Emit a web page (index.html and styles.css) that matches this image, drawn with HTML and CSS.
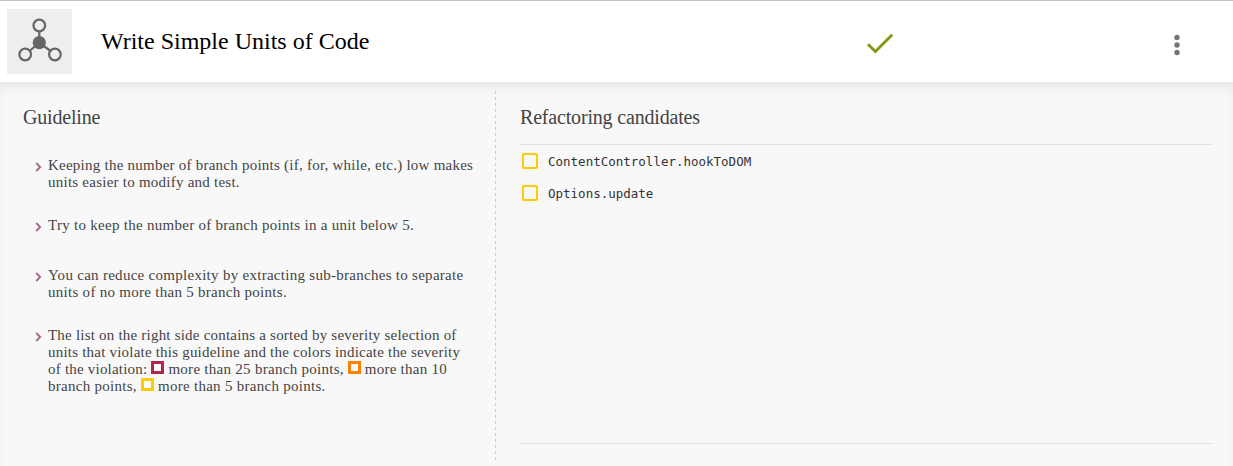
FILE: index.html
```html
<!DOCTYPE html>
<html lang="en">
<head>
<meta charset="utf-8">
<title>Write Simple Units of Code</title>
<link rel="stylesheet" href="styles.css">
</head>
<body>
<header class="header">
  <div class="thumb">
    <svg width="65" height="65" viewBox="0 0 65 65" fill="none" stroke="#666" stroke-width="2.200">
      <path d="M32.300 22v10M32.300 33.700L22.500 42M32.300 33.700L43.500 42"/>
      <circle cx="32.300" cy="16.500" r="5.800"/>
      <circle cx="18.200" cy="45.500" r="5.800"/>
      <circle cx="47.900" cy="45.500" r="5.800"/>
      <circle cx="32.300" cy="33.700" r="6.600" fill="#666" stroke="none"/>
    </svg>
  </div>
  <h1 class="title">Write Simple Units of Code</h1>
  <svg class="check" width="28" height="22" viewBox="0 0 28 22" fill="none" stroke="#7f9a15" stroke-width="2.900"><path d="M2 11.200l7.400 7.300L26.200 1.700"/></svg>
  <svg class="more" width="8" height="22" viewBox="0 0 8 22" fill="#757575"><circle cx="4" cy="3.500" r="2.700"/><circle cx="4" cy="11" r="2.700"/><circle cx="4" cy="18.500" r="2.700"/></svg>
</header>
<main class="panel">
  <section class="guideline">
    <h2 class="heading">Guideline</h2>
    <ul class="rules">
      <li class="rule"><svg class="chevron" width="7" height="10" viewBox="0 0 7 10"><path d="M1.200 1l4 4-4 4"/></svg><p class="text">Keeping the number of branch points (if, for, while, etc.) low makes<br>units easier to modify and test.</p></li>
      <li class="rule"><svg class="chevron" width="7" height="10" viewBox="0 0 7 10"><path d="M1.200 1l4 4-4 4"/></svg><p class="text loose">Try to keep the number of branch points in a unit below 5.</p></li>
      <li class="rule"><svg class="chevron" width="7" height="10" viewBox="0 0 7 10"><path d="M1.200 1l4 4-4 4"/></svg><p class="text loose">You can reduce complexity by extracting sub-branches to separate<br>units of no more than 5 branch points.</p></li>
      <li class="rule"><svg class="chevron" width="7" height="10" viewBox="0 0 7 10"><path d="M1.200 1l4 4-4 4"/></svg><p class="text"><span class="snug">The list on the right side contains a sorted by severity selection of<br>units that violate this guideline and the colors indicate the severity<br>of the violation: </span><i class="swatch high"></i><span class="loose"> more than 25 branch points, </span><i class="swatch medium"></i> more than 10<br><span class="loose">branch points, <i class="swatch low"></i> more than 5 branch points.</span></p></li>
    </ul>
  </section>
  <div class="divider"></div>
  <section class="candidates">
    <h2 class="heading">Refactoring candidates</h2>
    <ul class="units">
      <li class="unit"><span class="box"></span><span class="name">ContentController.hookToDOM</span></li>
      <li class="unit"><span class="box"></span><span class="name">Options.update</span></li>
    </ul>
  </section>
</main>
</body>
</html>
```
FILE: styles.css
```css
* { box-sizing: border-box; }
body {
  margin: 0;
  height: 466px;
  display: flex;
  flex-direction: column;
  overflow: hidden;
  background: #fff;
  color: #444;
  font-family: "Liberation Serif", "Times New Roman", serif;
}
h1, h2, p, ul { margin: 0; padding: 0; font-weight: normal; }
ul { list-style: none; }
svg { display: block; flex: none; }
.header {
  height: 82px;
  flex: none;
  display: flex;
  align-items: flex-start;
  border-top: 1px solid #c3c3c3;
  padding: 8px 52px 0 7px;
}
.thumb { width: 65px; height: 65px; background: #eee; }
.title { margin: 18px 0 0 29px; font-size: 24px; line-height: 28px; color: #000; white-space: nowrap; }
.check { margin: 24px 0 0 auto; }
.more { margin: 25px 0 0 279px; }
.panel {
  flex: 1;
  display: flex;
  background: #f8f8f8;
  box-shadow: inset 0 10px 16px -8px rgba(0, 0, 0, .1);
}
.guideline { width: 495px; padding: 23px 0 0 23px; }
.heading { font-size: 20px; line-height: 24px; letter-spacing: -.18px; }
.rules { display: flex; flex-direction: column; gap: 26px; padding: 28px 0 0 12px; }
.rule { display: flex; min-height: 24px; }
.chevron { margin: 5px 6px 0 0; fill: none; stroke: #a5678a; stroke-width: 1.800; }
.text { font-size: 15px; line-height: 17px; letter-spacing: .24px; white-space: nowrap; }
.loose { letter-spacing: .28px; }
.snug { letter-spacing: .21px; }
.swatch { display: inline-block; width: 13px; height: 13px; border: 3px solid; background: #fff; }
.high { border-color: #b5244b; }
.medium { border-color: #ff8000; }
.low { border-color: #ffcb05; }
.divider {
  width: 1px;
  height: 370px;
  margin-top: 8px;
  background: repeating-linear-gradient(transparent 0 1px, #ccc 1px 4px, transparent 4px 6px);
}
.candidates { flex: 1; padding: 23px 21px 0 24px; }
.units {
  height: 300px;
  margin-top: 15px;
  border-top: 1px solid #e0e0e0;
  border-bottom: 1px solid #e0e0e0;
}
.unit {
  display: flex;
  align-items: center;
  height: 32px;
  padding-left: 2px;
  gap: 10px;
  color: #333;
  font: 12.500px/16px "DejaVu Sans Mono", monospace;
}
.name { padding-top: 2px; }
.box { width: 16px; height: 16px; border: 2px solid #ffcb05; border-radius: 2px; }
```
